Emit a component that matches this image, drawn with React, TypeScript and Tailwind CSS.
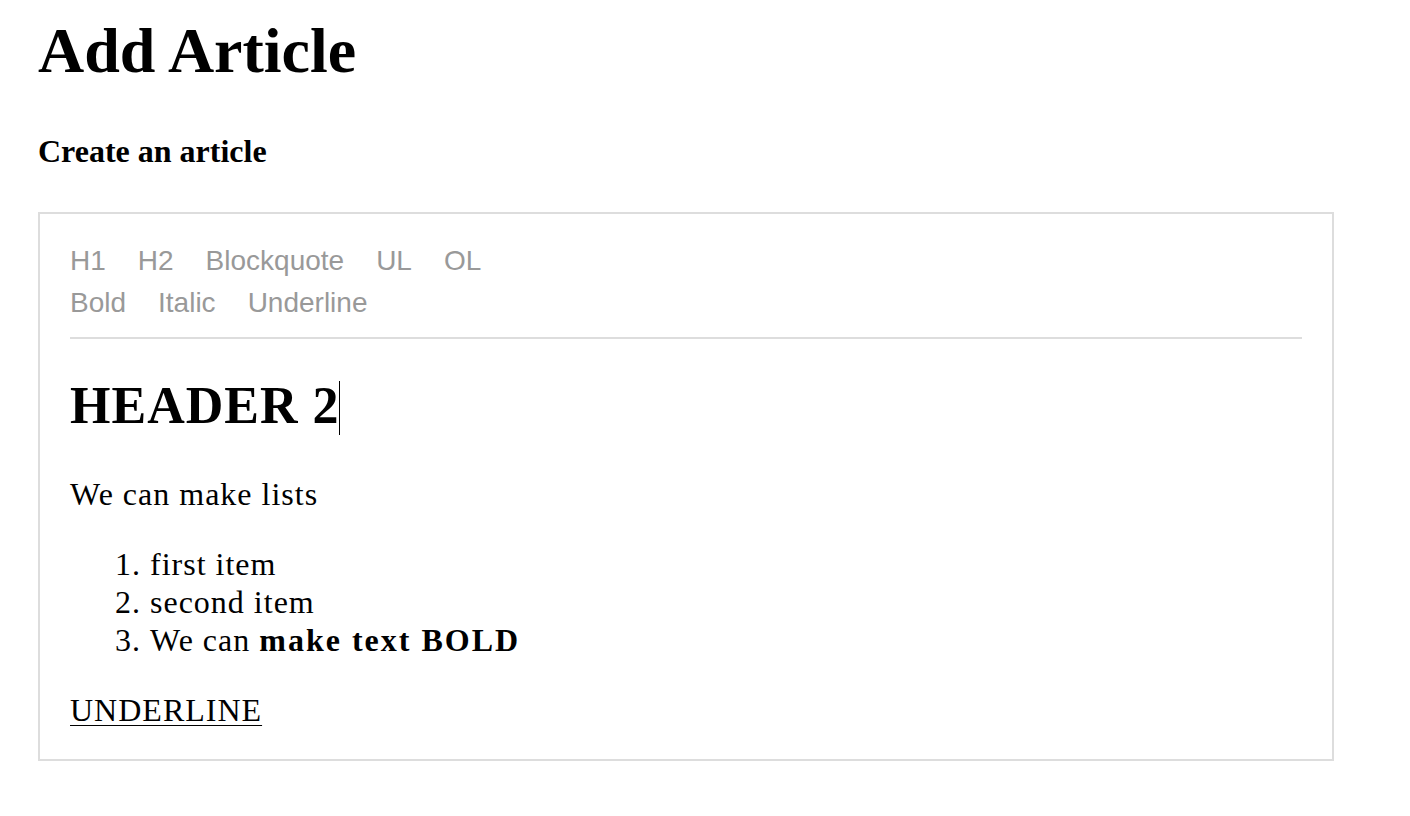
import React from 'react'

const blockStyles = ['H1', 'H2', 'Blockquote', 'UL', 'OL']
const inlineStyles = ['Bold', 'Italic', 'Underline']

const StyleButton = ({ label }: { label: string }) => (
  <span className="mr-[32px] cursor-pointer text-[#999]">{label}</span>
)

export default function App() {
  return (
    <div className="min-h-[816px] bg-white pl-[38px] text-black [font-family:'Liberation_Serif',serif]">
      <h1 className="pt-[11px] text-[64px] font-bold leading-[80px]">Add Article</h1>
      <h4 className="mt-[42px] text-[32px] font-bold leading-[36px]">Create an article</h4>

      <div className="mt-[43px] w-[1296px] border-2 border-[#ddd] px-[30px] pt-[26px] pb-[30px]">
        <div className="border-b-2 border-[#ddd] pb-[13px] text-[28px] leading-[42px] [font-family:'Liberation_Sans',Arial,sans-serif]">
          <div>
            {blockStyles.map((s) => (
              <StyleButton key={s} label={s} />
            ))}
          </div>
          <div>
            {inlineStyles.map((s) => (
              <StyleButton key={s} label={s} />
            ))}
          </div>
        </div>

        <div className="text-[32px] leading-[38px] tracking-[1px]">
          <h2 className="mt-[39px] mb-[40px] text-[52px] font-bold leading-[55px] tracking-[1px]">
            HEADER 2
            <span className="inline-block h-[54px] w-px bg-black align-[-12px]" />
          </h2>
          <p>We can make lists</p>
          <ol className="my-[32px] list-decimal pl-[80px]">
            <li>first item</li>
            <li>second item</li>
            <li>
              We can <strong className="font-bold tracking-[2px]">make text BOLD</strong>
            </li>
          </ol>
          <p className="underline decoration-1 underline-offset-[4px]">UNDERLINE</p>
        </div>
      </div>
    </div>
  )
}
